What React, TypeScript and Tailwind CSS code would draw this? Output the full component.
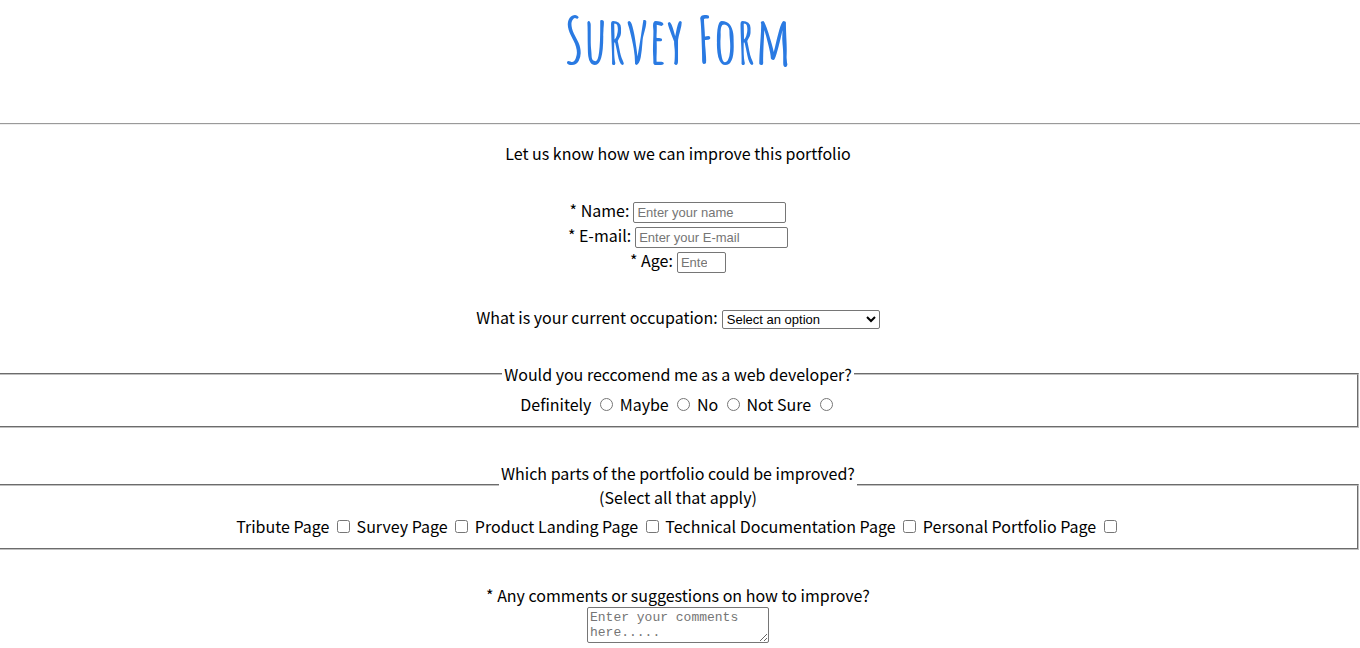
import type { ReactNode } from "react";

const field =
  "h-[21px] rounded-[2px] border border-[#767676] bg-white px-[3px] font-['Liberation_Sans',Arial,sans-serif] text-[13px] text-black placeholder:text-[#757575]";

function Row({ id, label, children }: { id: string; label: string; children: ReactNode }) {
  return (
    <div className="flex h-[25px] items-center justify-center gap-1">
      <label htmlFor={id} className="self-start leading-[21px]">
        {label}
      </label>
      {children}
    </div>
  );
}

function Choices({ type, name, labels }: { type: "radio" | "checkbox"; name: string; labels: string[] }) {
  const spacing = type === "radio" ? "ml-[5px]" : "ml-1";
  return (
    <>
      {labels.map((label) => (
        <label key={label}>
          {label}{" "}
          <input type={type} name={name} value={label} className={`${spacing} mr-[3px] size-[13px] align-baseline`} />{" "}
        </label>
      ))}
    </>
  );
}

const group = "-ml-[3px] mr-px border-2 border-[#c0c0c0] [border-style:groove] px-3";

export default function App() {
  return (
    <div className="overflow-x-hidden bg-white text-center font-['Noto_Sans_CJK_JP','Source_Sans_Pro',sans-serif] text-[16px] leading-6 text-black">
      <header className="flex h-[123px] justify-center pr-1">
        <h1 className="text-[64px] leading-[80px] font-bold text-[#2a7ae2] font-['Amatic_SC','Liberation_Sans_Narrow',sans-serif]">
          Survey Form
        </h1>
      </header>
      <hr className="border-t border-b border-t-[#9a9a9a] border-b-[#eeeeee]" />
      <form>
        <p className="mt-4 pr-1">Let us know how we can improve this portfolio</p>

        <div className="mt-[35px] pr-1">
          <Row id="name" label="* Name:">
            <input id="name" type="text" placeholder="Enter your name" className={`${field} w-[153px]`} />
          </Row>
          <Row id="email" label="* E-mail:">
            <input id="email" type="email" placeholder="Enter your E-mail" className={`${field} w-[153px]`} />
          </Row>
          <Row id="age" label="* Age:">
            <input id="age" type="text" inputMode="numeric" placeholder="Enter your age" className={`${field} w-[49px] pr-[18px]`} />
          </Row>
        </div>

        <div className="mt-8 pr-1">
          <Row id="occupation" label="What is your current occupation:">
            <select
              id="occupation"
              className="h-[19px] w-[158px] rounded-[2px] border border-[#767676] bg-white font-['Liberation_Sans',Arial,sans-serif] text-[13px] text-black"
            >
              <option>Select an option</option>
              <option>Student</option>
              <option>Full Time Job</option>
              <option>Other</option>
            </select>
          </Row>
        </div>

        <fieldset className={`${group} mt-[30px] pb-2.5`}>
          <legend className="mx-auto px-0.5">Would you reccomend me as a web developer?</legend>
          <div className="mt-1.5">
            <Choices type="radio" name="recommend" labels={["Definitely", "Maybe", "No", "Not Sure"]} />
          </div>
        </fieldset>

        <fieldset className={`${group} mt-[33px] pb-2.5`}>
          <legend className="mx-auto px-0.5">
            Which parts of the portfolio could be improved?
            <br />
            (Select all that apply)
          </legend>
          <div className="mt-[5px]">
            <Choices
              type="checkbox"
              name="parts"
              labels={[
                "Tribute Page",
                "Survey Page",
                "Product Landing Page",
                "Technical Documentation Page",
                "Personal Portfolio Page",
              ]}
            />
          </div>
        </fieldset>

        <div className="mt-[33px] flex flex-col items-center pr-1">
          <label htmlFor="comments">* Any comments or suggestions on how to improve?</label>
          <textarea
            id="comments"
            placeholder="Enter your comments here....."
            className="h-9 w-[182px] resize rounded-[2px] border border-[#767676] bg-white p-0.5 font-['Liberation_Mono','Courier_New',monospace] text-[13px] leading-[15px] text-black placeholder:text-[#757575]"
          />
        </div>
      </form>
    </div>
  );
}
